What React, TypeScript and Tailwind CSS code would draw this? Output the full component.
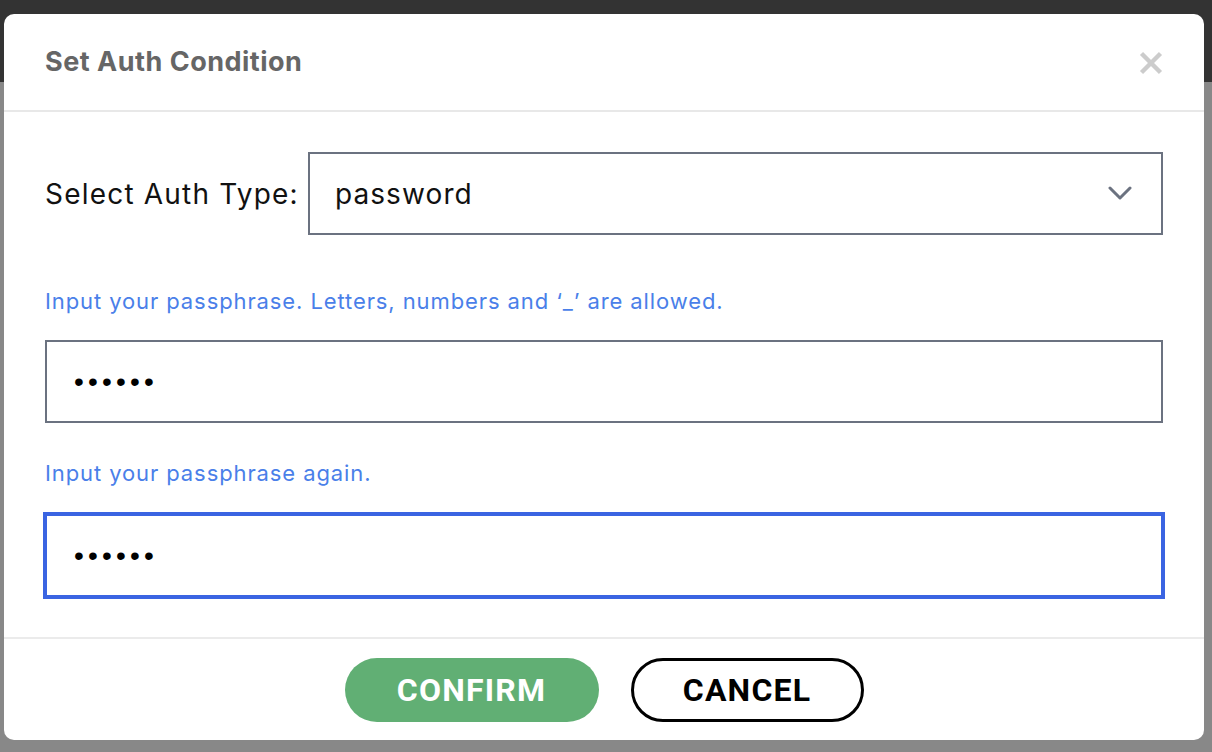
function Chevron() {
  return (
    <svg width="24" height="15" viewBox="0 0 24 15" fill="none">
      <polyline points="2,2 12,12 22,2" stroke="#6b7280" strokeWidth="3" strokeLinecap="round" strokeLinejoin="round" />
    </svg>
  );
}

function CloseIcon() {
  return (
    <svg width="24" height="24" viewBox="0 0 24 24" fill="none">
      <line x1="2.5" y1="2.5" x2="21.5" y2="21.5" stroke="#cccccc" strokeWidth="4.5" />
      <line x1="21.5" y1="2.5" x2="2.5" y2="21.5" stroke="#cccccc" strokeWidth="4.5" />
    </svg>
  );
}

export default function App() {
  return (
    <div className="relative w-[1212px] h-[752px] bg-[#888888] overflow-hidden font-['Inter',sans-serif]">
      {/* app header behind the overlay */}
      <div className="h-[82px] bg-[#333333]" />

      {/* Modal */}
      <div className="absolute left-[4px] top-[14px] w-[1200px] h-[726px] bg-white rounded-[10px] flex flex-col">
        <header className="h-[98px] shrink-0 flex items-center justify-between px-[41px] border-b-2 border-[#e8e8e8]">
          <h2 className="text-[27px] font-bold text-[#666666] tracking-[0.5px]">Set Auth Condition</h2>
          <button className="mt-[2px]" aria-label="close">
            <CloseIcon />
          </button>
        </header>

        <main className="flex-1 px-[41px] pt-[40px] pb-[40px] flex flex-col">
          <div className="flex items-center">
            <label className="text-[28px] text-[#111111] mr-[9px] tracking-[1.2px]">Select Auth Type:</label>
            <div className="flex-1 h-[83px] border-2 border-[#6b7280] flex items-center justify-between pl-[25px] pr-[29px]">
              <span className="text-[28px] text-[#111111] tracking-[1.1px]">password</span>
              <Chevron />
            </div>
          </div>

          <p className="mt-[51px] text-[22px] leading-[30px] text-[#4a7fe9] tracking-[0.9px]">
            Input your passphrase. Letters, numbers and ‘_’ are allowed.
          </p>
          <input
            type="password"
            readOnly
            value="123456"
            className="mt-[24px] h-[83px] w-full border-2 border-[#6b7280] px-[27px] text-[28px] tracking-[4.2px] outline-none font-['Liberation_Sans',sans-serif]"
          />

          <p className="mt-[35px] text-[22px] leading-[30px] text-[#4a7fe9] tracking-[0.9px]">
            Input your passphrase again.
          </p>
          <input
            type="password"
            readOnly
            value="123456"
            className="mt-[26px] h-[83px] w-full border-2 border-[#3a64e2] ring-2 ring-[#3a64e2] px-[27px] text-[28px] tracking-[4.2px] outline-none font-['Liberation_Sans',sans-serif]"
          />
        </main>

        <footer className="h-[104px] shrink-0 border-t-2 border-[#ebebeb] flex items-center justify-center gap-[32px] font-['Roboto',sans-serif]">
          <button className="w-[254px] h-[64px] rounded-full bg-[#61af74] text-white text-[32px] font-bold tracking-[1.2px]">
            CONFIRM
          </button>
          <button className="w-[233px] h-[64px] rounded-full border-[3px] border-black text-black text-[32px] font-bold tracking-[1.2px]">
            CANCEL
          </button>
        </footer>
      </div>
    </div>
  );
}
